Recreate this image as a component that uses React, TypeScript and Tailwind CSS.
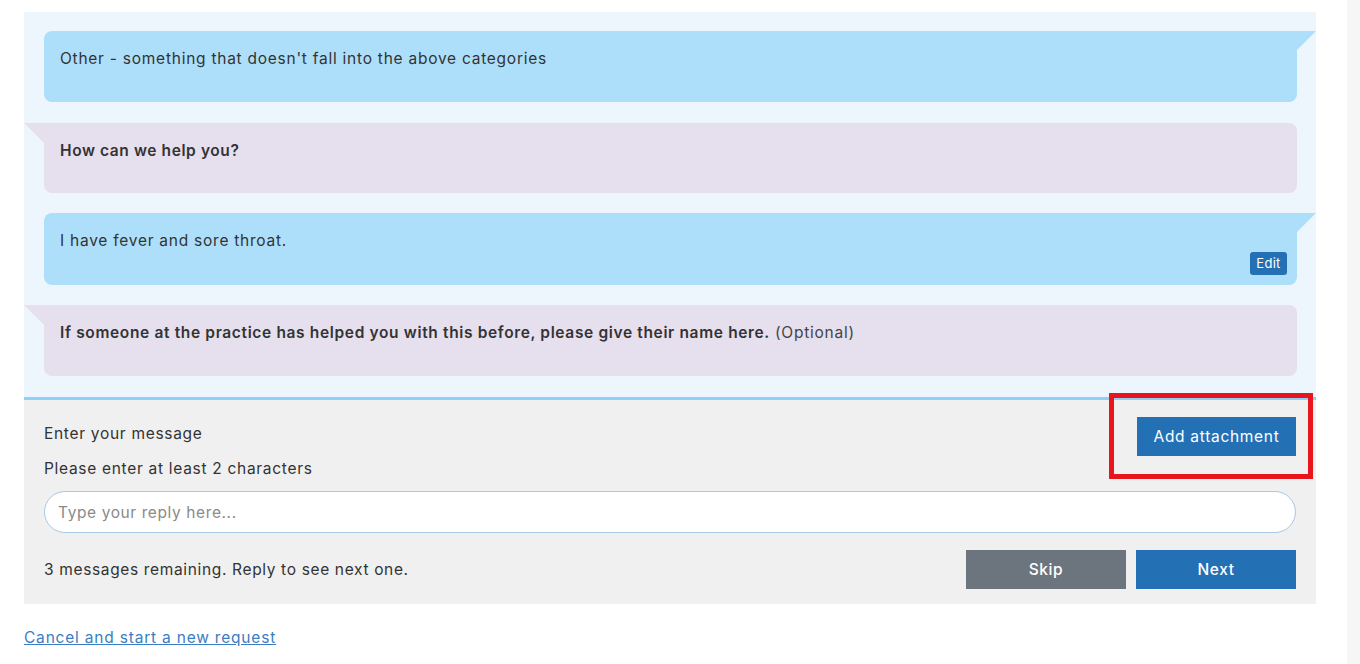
import React from "react";

function BlueBubble({ children, edit, h }: { children: React.ReactNode; edit?: boolean; h: string }) {
  return (
    <div className={`relative ${h} rounded-[8px] rounded-tr-none bg-[#aedffa] pl-4 pr-4 pt-4 pb-4`}>
      <svg className="absolute top-0 right-[-19px]" width="19" height="19" viewBox="0 0 19 19">
        <polygon points="0,0 19,0 0,19" fill="#aedffa" />
      </svg>
      <div className="text-[15.5px] leading-6 tracking-[0.75px] text-[#333]">{children}</div>
      {edit && (
        <button className="absolute bottom-[10px] right-[10px] h-[23px] w-[37px] rounded-[3px] bg-[#2470b5] text-[13px] leading-[23px] tracking-[0.3px] text-white">
          Edit
        </button>
      )}
    </div>
  );
}

function PurpleBubble({ children, h }: { children: React.ReactNode; h: string }) {
  return (
    <div className={`relative ${h} rounded-[8px] rounded-tl-none bg-[#e6dfee] pl-4 pr-4 pt-4 pb-4`}>
      <svg className="absolute top-0 left-[-20px]" width="20" height="20" viewBox="0 0 20 20">
        <polygon points="0,0 20,0 20,20" fill="#e6dfee" />
      </svg>
      <div className="text-[15.5px] leading-6 tracking-[0.6px] text-[#333]">{children}</div>
    </div>
  );
}

export default function App() {
  return (
    <div
      className="flex h-[664px] w-full bg-white"
      style={{ fontFamily: "Inter, 'Open Sans', sans-serif" }}
    >
      <div className="flex-1 pl-[24px] pt-[12px]">
        <div className="w-[1292px]">
          <div className="flex flex-col border-b-[3px] border-[#8fd0f8] bg-[#eef6fd] pl-[20px] pr-[19px] pt-[19px] pb-[21px]">
            <BlueBubble h="h-[71px]">Other - something that doesn't fall into the above categories</BlueBubble>
            <div className="mt-[21px]">
              <PurpleBubble h="h-[70px]">
                <span className="font-semibold">How can we help you?</span>
              </PurpleBubble>
            </div>
            <div className="mt-[20px]">
              <BlueBubble edit h="h-[72px]">I have fever and sore throat.</BlueBubble>
            </div>
            <div className="mt-[20px]">
              <PurpleBubble h="h-[71px]">
                <span className="font-semibold tracking-[0.65px]">
                  If someone at the practice has helped you with this before, please give their name here.
                </span>{" "}
                <span className="tracking-[0.75px] text-[#444]">(Optional)</span>
              </PurpleBubble>
            </div>
          </div>
          <div className="bg-[#f0f0f0] px-[20px] pt-[17px] pb-[15px]">
            <div className="flex items-start justify-between">
              <div className="pt-[5px] text-[15.5px] leading-6 tracking-[0.7px] text-[#333]">
                <div>Enter your message</div>
                <div className="mt-[11px]">Please enter at least 2 characters</div>
              </div>
              <div className="relative">
                <div className="absolute -left-[28px] -top-[24px] -right-[17px] -bottom-[23px] border-[5px] border-[#e8161c]" />
                <button className="relative h-[39px] w-[159px] bg-[#2470b5] text-[15.5px] tracking-[0.7px] text-white">
                  Add attachment
                </button>
              </div>
            </div>
            <input
              className="mt-[10px] block h-[42px] w-full rounded-[21px] border border-[#a9c8e6] bg-white px-[13px] text-[15.5px] tracking-[0.6px] text-[#333] outline-none placeholder:text-[#8a8a8a]"
              placeholder="Type your reply here..."
            />
            <div className="mt-[17px] flex items-center justify-between">
              <div className="text-[15.5px] leading-6 tracking-[0.65px] text-[#333]">
                3 messages remaining. Reply to see next one.
              </div>
              <div className="flex gap-[10px]">
                <button className="h-[39px] w-[160px] bg-[#6c757d] text-[15.5px] font-medium tracking-[0.6px] text-white">Skip</button>
                <button className="h-[39px] w-[160px] bg-[#2470b5] text-[15.5px] font-medium tracking-[0.6px] text-white">Next</button>
              </div>
            </div>
          </div>
          <div className="mt-[21px] leading-6">
            <a href="#" className="text-[15.5px] tracking-[0.8px] text-[#3b7dc4] underline">
              Cancel and start a new request
            </a>
          </div>
        </div>
      </div>
      <div className="h-full w-[13px] bg-[#f6f6f6]" />
    </div>
  );
}
